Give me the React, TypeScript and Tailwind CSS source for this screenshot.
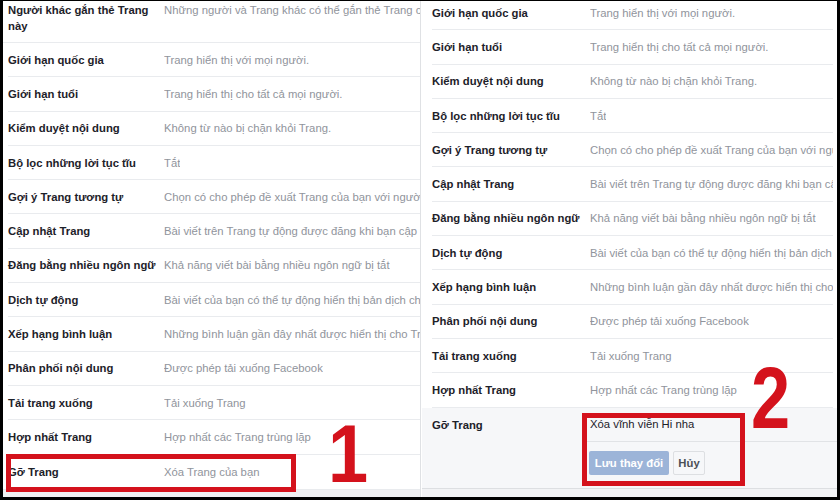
type Row = [string, string]

const leftRows: Row[] = [
  ['Giới hạn quốc gia', 'Trang hiển thị với mọi người.'],
  ['Giới hạn tuổi', 'Trang hiển thị cho tất cả mọi người.'],
  ['Kiểm duyệt nội dung', 'Không từ nào bị chặn khỏi Trang.'],
  ['Bộ lọc những lời tục tĩu', 'Tắt'],
  ['Gợi ý Trang tương tự', 'Chọn có cho phép đề xuất Trang của bạn với người khác hay không'],
  ['Cập nhật Trang', 'Bài viết trên Trang tự động được đăng khi bạn cập nhật thông tin Trang'],
  ['Đăng bằng nhiều ngôn ngữ', 'Khả năng viết bài bằng nhiều ngôn ngữ bị tắt'],
  ['Dịch tự động', 'Bài viết của bạn có thể tự động hiển thị bản dịch cho người xem'],
  ['Xếp hạng bình luận', 'Những bình luận gần đây nhất được hiển thị cho Trang của tôi'],
  ['Phân phối nội dung', 'Được phép tải xuống Facebook'],
  ['Tải trang xuống', 'Tải xuống Trang'],
  ['Hợp nhất Trang', 'Hợp nhất các Trang trùng lặp'],
]

function SettingRow({ label, value, labelW }: { label: string; value: string; labelW: string }) {
  return (
    <div className="flex h-[34.3px] shrink-0 items-center border-b border-[#e9ebee]">
      <div className={`${labelW} shrink-0 whitespace-nowrap font-bold text-[#1d2129]`}>{label}</div>
      <div className="overflow-hidden whitespace-nowrap text-[#90949c]">{value}</div>
    </div>
  )
}

export default function App() {
  return (
    <div className="relative flex h-[500px] w-[840px] overflow-hidden border-t border-r-[3px] border-b-[3px] border-l-[3px] border-black bg-white font-['Liberation_Sans',Arial,sans-serif] text-[11.3px] leading-4">
      {/* Left panel */}
      <div className="flex w-[417px] shrink-0 flex-col overflow-hidden">
        <div className="-mt-[8px] flex flex-col">
          <div className="flex h-[50px] shrink-0 items-center border-b border-[#e9ebee]">
            <div className="w-[161px] shrink-0 pl-[5px] pr-2 font-bold text-[#1d2129]">Người khác gắn thẻ Trang này</div>
            <div className="self-start overflow-hidden whitespace-nowrap pt-[9px] text-[#90949c]">
              Những người và Trang khác có thể gắn thẻ Trang của bạn
            </div>
          </div>
          {leftRows.map(([label, value]) => (
            <div key={label} className="pl-[5px]">
              <SettingRow label={label} value={value} labelW="w-[156px]" />
            </div>
          ))}
          <div className="flex h-[34.3px] shrink-0 items-center pl-[5px]">
            <div className="w-[156px] shrink-0 font-bold text-[#1d2129]">Gỡ Trang</div>
            <div className="text-[#90949c]">Xóa Trang của bạn</div>
          </div>
        </div>
        <div className="flex-1 border-t border-[#e9ebee] bg-[#eff0f2]" />
      </div>

      {/* Divider */}
      <div className="w-px shrink-0 bg-[#dfe1e4]" />
      <div className="w-px shrink-0" />

      {/* Right panel */}
      <div className="flex min-w-0 flex-1 flex-col overflow-hidden">
        <div className="-mt-[5px] flex flex-col">
          {leftRows.map(([label, value]) => (
            <div key={label} className="pl-[10px] pr-[4px]">
              <SettingRow label={label} value={value} labelW="w-[158px]" />
            </div>
          ))}
          <div className="flex bg-[#f6f7f9]">
            <div className="w-[165px] shrink-0 pl-[10px] pt-[9px] font-bold text-[#1d2129]">Gỡ Trang</div>
            <div className="flex min-w-0 flex-1 flex-col">
              <div className="flex h-[34.3px] items-center border-b border-[#e1e3e6] pl-[3px] text-[#1d2129]">
                Xóa vĩnh viễn Hi nha
              </div>
              <div className="flex h-[46px] items-start gap-[4px] pl-[2px] pt-[9px]">
                <button className="h-[24px] w-[80px] rounded-[2px] bg-[#9cb4d8] text-[11.3px] font-bold text-white">
                  Lưu thay đổi
                </button>
                <button className="h-[24px] w-[32px] rounded-[2px] border border-[#dddfe2] bg-[#f6f7f9] text-[11.3px] font-bold text-[#4b4f56]">
                  Hủy
                </button>
              </div>
            </div>
          </div>
        </div>
        <div className="flex-1 border-t border-[#dddfe2] bg-[#f2f3f5]" />
      </div>

      {/* Annotations */}
      <div className="absolute left-[3px] top-[453px] h-[38px] w-[290px] border-[5px] border-[#d4121c]" />
      <div className="absolute left-[579px] top-[412px] h-[73px] w-[163px] border-[5px] border-[#d4121c]" />
      <div className="absolute left-[325px] top-[412px] origin-left scale-x-[0.88] text-[82px] font-bold leading-none text-[#d4121c]">
        1
      </div>
      <div className="absolute left-[748px] top-[353px] origin-left scale-x-[0.8] text-[88px] font-bold leading-none text-[#d4121c]">
        2
      </div>
    </div>
  )
}
